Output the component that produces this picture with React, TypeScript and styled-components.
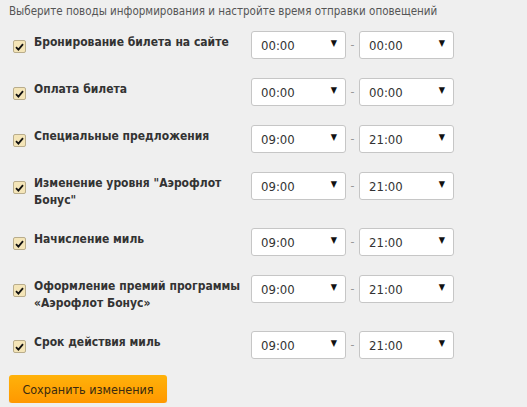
import styled, { createGlobalStyle } from 'styled-components';

const GlobalStyle = createGlobalStyle`
  html, body {
    margin: 0;
    padding: 0;
    background: #efefef;
  }
  body {
    font-family: "DejaVu Sans Condensed", "DejaVu Sans", Verdana, sans-serif;
    color: #333;
  }
`;

const Page = styled.div`
  padding: 3px 9px 0 9px;
  width: 509px;
`;

const Intro = styled.div`
  font-size: 11.5px;
  line-height: 16px;
  color: #555;
  margin-bottom: 12px;
  white-space: nowrap;
`;

const List = styled.div`
  display: flex;
  flex-direction: column;
  gap: 19px;
`;

const Row = styled.div`
  display: flex;
  align-items: flex-start;
`;

const Check = styled.span`
  flex: none;
  width: 11px;
  height: 11px;
  margin: 9px 8px 0 4px;
  border: 1px solid #b9ad8c;
  border-radius: 2px;
  background: #f4e5b8;
  display: flex;
  align-items: center;
  justify-content: center;
`;

const Label = styled.div`
  width: 217px;
  flex: none;
  padding-top: 3px;
  font-size: 12px;
  line-height: 17px;
  font-weight: bold;
  color: #333;
`;

const Times = styled.div`
  display: flex;
  align-items: center;
`;

const Select = styled.div`
  box-sizing: border-box;
  width: 95px;
  height: 28px;
  padding: 0 9px;
  background: #fff;
  border: 1px solid #c6c6c6;
  border-radius: 3px;
  display: flex;
  align-items: center;
  justify-content: space-between;
  font-size: 13px;
  color: #333;
`;

const Arrow = styled.span`
  font-size: 9px;
  color: #111;
  margin-top: -4px;
  margin-right: -1px;
`;

const Dash = styled.span`
  width: 13px;
  text-align: center;
  color: #999;
  font-size: 12px;
`;

const SaveButton = styled.button`
  margin-top: 16px;
  width: 158px;
  height: 28px;
  border: none;
  border-radius: 3px;
  background: linear-gradient(to bottom, #ffb20a, #ff9800);
  box-shadow: 0 1px 1px rgba(0, 0, 0, 0.12);
  font-family: inherit;
  font-size: 12.5px;
  color: #3a2a10;
  padding: 0;
  cursor: pointer;
`;

const items = [
  { label: 'Бронирование билета на сайте', from: '00:00', to: '00:00' },
  { label: 'Оплата билета', from: '00:00', to: '00:00' },
  { label: 'Специальные предложения', from: '09:00', to: '21:00' },
  { label: 'Изменение уровня "Аэрофлот Бонус"', from: '09:00', to: '21:00' },
  { label: 'Начисление миль', from: '09:00', to: '21:00' },
  { label: 'Оформление премий программы «Аэрофлот Бонус»', from: '09:00', to: '21:00' },
  { label: 'Срок действия миль', from: '09:00', to: '21:00' },
];

function CheckMark() {
  return (
    <svg width="9" height="8" viewBox="0 0 9 8">
      <path d="M1 4.2 L3.4 6.6 L8 1.2" fill="none" stroke="#111" strokeWidth="1.8" />
    </svg>
  );
}

export default function App() {
  return (
    <>
      <GlobalStyle />
      <Page>
        <Intro>Выберите поводы информирования и настройте время отправки оповещений</Intro>
        <List>
          {items.map(item => (
            <Row key={item.label}>
              <Check>
                <CheckMark />
              </Check>
              <Label>{item.label}</Label>
              <Times>
                <Select>
                  {item.from}
                  <Arrow>▼</Arrow>
                </Select>
                <Dash>-</Dash>
                <Select>
                  {item.to}
                  <Arrow>▼</Arrow>
                </Select>
              </Times>
            </Row>
          ))}
        </List>
        <SaveButton>Сохранить изменения</SaveButton>
      </Page>
    </>
  );
}
